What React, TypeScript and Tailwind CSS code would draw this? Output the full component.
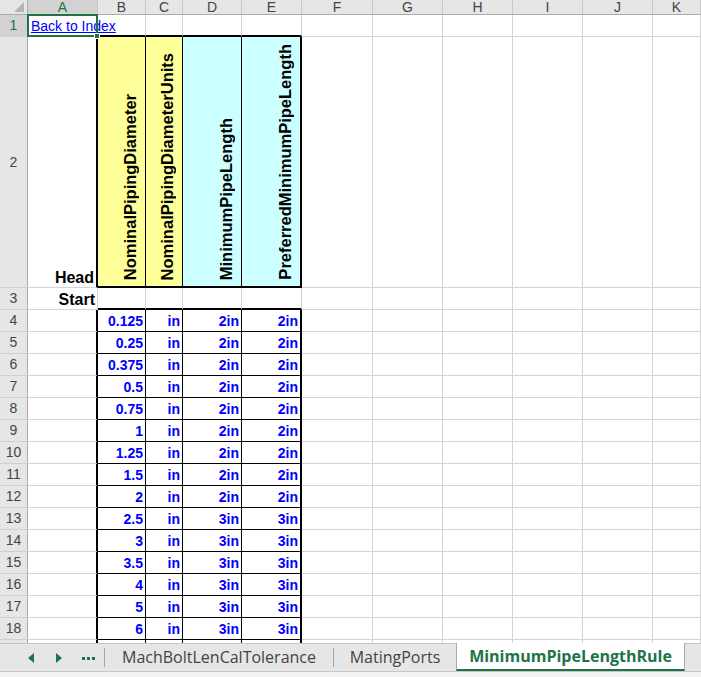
import React from 'react';

const COLS = ['A', 'B', 'C', 'D', 'E', 'F', 'G', 'H', 'I', 'J', 'K'];
const GRID = 'grid grid-cols-[28px_70px_48px_37px_59px_60px_71px_70px_70px_70px_70px_1fr]';

const HEADERS = [
  { label: 'NominalPipingDiameter', bg: 'bg-[#ffff99]' },
  { label: 'NominalPipingDiameterUnits', bg: 'bg-[#ffff99]' },
  { label: 'MinimumPipeLength', bg: 'bg-[#ccffff]' },
  { label: 'PreferredMinimumPipeLength', bg: 'bg-[#ccffff]' },
];

// row 19 is only a sliver above the sheet tabs, so it is left empty
const DATA: [string, string, string, string][] = [
  ['0.125', 'in', '2in', '2in'],
  ['0.25', 'in', '2in', '2in'],
  ['0.375', 'in', '2in', '2in'],
  ['0.5', 'in', '2in', '2in'],
  ['0.75', 'in', '2in', '2in'],
  ['1', 'in', '2in', '2in'],
  ['1.25', 'in', '2in', '2in'],
  ['1.5', 'in', '2in', '2in'],
  ['2', 'in', '2in', '2in'],
  ['2.5', 'in', '3in', '3in'],
  ['3', 'in', '3in', '3in'],
  ['3.5', 'in', '3in', '3in'],
  ['4', 'in', '3in', '3in'],
  ['5', 'in', '3in', '3in'],
  ['6', 'in', '3in', '3in'],
  ['', '', '', ''],
];

// borders for a worksheet cell; row = excel row number, col = 0 for A
function cellBorder(row: number, col: number) {
  const tableRow = row === 2 || row >= 4;
  const inTable = tableRow && col >= 1 && col <= 4;
  let right = 'border-r border-r-[#d4d4d4]';
  if (inTable && col === 4) right = 'border-r-2 border-r-black';
  else if (inTable) right = 'border-r border-r-black';
  else if (tableRow && col === 0) right = 'border-r-2 border-r-black';

  let bottom = 'border-b border-b-[#d4d4d4]';
  if (inTable && row === 2) bottom = 'border-b-2 border-b-black';
  else if (inTable) bottom = 'border-b border-b-black';
  else if ((row === 1 || row === 3) && col >= 1 && col <= 4) bottom = 'border-b-2 border-b-black';

  return `${right} ${bottom}`;
}

function RowHeader({ n, selected }: { n: number; selected?: boolean }) {
  return (
    <div
      className={`flex items-center justify-center border-r border-r-[#ababab] border-b border-b-[#d0d0d0] text-[14px] ${
        selected ? 'bg-[#d2d2d2] text-[#217346]' : 'bg-[#e6e6e6] text-[#444]'
      }`}
    >
      {n < 19 ? n : ''}
    </div>
  );
}

function ColumnHeaders() {
  return (
    <div className={`${GRID} h-[15px]`}>
      <div className="relative bg-[#e6e6e6] border-r border-r-[#ababab] border-b border-b-[#ababab]">
        <div className="absolute right-[3px] bottom-[2px] w-0 h-0 border-l-[10px] border-l-transparent border-b-[10px] border-b-[#b4b4b4]" />
      </div>
      {COLS.map((c, i) => (
        <div
          key={c}
          className={`flex items-center justify-center text-[14px] leading-none border-r border-r-[#c8c8c8] border-b border-b-[#ababab] ${
            i === 0 ? 'bg-[#d2d2d2] text-[#217346]' : 'bg-[#e6e6e6] text-[#444]'
          }`}
        >
          {c}
        </div>
      ))}
    </div>
  );
}

function Row1() {
  return (
    <div className={`${GRID} h-[22px]`}>
      <RowHeader n={1} selected />
      <div className={`relative flex items-end pl-[3px] pb-[2px] ${cellBorder(1, 0)}`}>
        <a href="#" className="whitespace-nowrap text-[14px] leading-[16px] text-[#0000ff] underline">
          Back to Index
        </a>
        <div className="absolute -left-px -top-px -right-px -bottom-px border-2 border-[#217346]" />
        <div className="absolute -right-[3px] -bottom-[3px] w-[6px] h-[6px] bg-[#217346] border border-white" />
      </div>
      {COLS.slice(1).map((c, i) => (
        <div key={c} className={cellBorder(1, i + 1)} />
      ))}
    </div>
  );
}

function Row2() {
  return (
    <div className={`${GRID} h-[251px]`}>
      <RowHeader n={2} />
      <div className={`flex items-end justify-end pr-[2px] text-[16px] leading-[18px] font-bold ${cellBorder(2, 0)}`}>
        Head
      </div>
      {HEADERS.map((h, i) => (
        <div key={h.label} className={`flex items-end justify-end pr-[6px] pb-[6px] ${h.bg} ${cellBorder(2, i + 1)}`}>
          <span className="[writing-mode:vertical-rl] rotate-180 whitespace-nowrap text-[16.5px] leading-[18px] font-bold">
            {h.label}
          </span>
        </div>
      ))}
      {COLS.slice(5).map((c, i) => (
        <div key={c} className={cellBorder(2, i + 5)} />
      ))}
    </div>
  );
}

function Row3() {
  return (
    <div className={`${GRID} h-[22px]`}>
      <RowHeader n={3} />
      <div className={`flex items-end justify-end pr-[2px] text-[16px] leading-[18px] font-bold ${cellBorder(3, 0)}`}>
        Start
      </div>
      {COLS.slice(1).map((c, i) => (
        <div key={c} className={cellBorder(3, i + 1)} />
      ))}
    </div>
  );
}

function DataRow({ n, values }: { n: number; values: string[] }) {
  return (
    <div className={`${GRID} h-[22px]`}>
      <RowHeader n={n} />
      <div className={cellBorder(n, 0)} />
      {values.map((v, i) => (
        <div
          key={i}
          className={`flex items-end justify-end pr-[2px] pb-[2px] text-[14px] leading-[16px] font-bold text-[#0000ff] ${cellBorder(n, i + 1)}`}
        >
          {v}
        </div>
      ))}
      {COLS.slice(5).map((c, i) => (
        <div key={c} className={cellBorder(n, i + 5)} />
      ))}
    </div>
  );
}

function TriangleLeft() {
  return (
    <svg width="6" height="10" viewBox="0 0 6 10">
      <path d="M6 0 L0 5 L6 10 Z" fill="#217346" />
    </svg>
  );
}

function TriangleRight() {
  return (
    <svg width="6" height="10" viewBox="0 0 6 10">
      <path d="M0 0 L6 5 L0 10 Z" fill="#217346" />
    </svg>
  );
}

function SheetTabs() {
  return (
    <div className="flex flex-col">
      <div className="flex h-[28px] bg-[#e6e6e6] border-t border-t-[#c6c6c6] font-['Open_Sans','Noto_Sans',sans-serif] text-[16px] text-[#444]">
        <div className="flex items-center w-[104px] pl-[28px]">
          <TriangleLeft />
          <span className="ml-[22px]">
            <TriangleRight />
          </span>
          <span className="ml-[20px] mt-[2px] flex gap-[2px]">
            <i className="block w-[3px] h-[3px] bg-[#217346]" />
            <i className="block w-[3px] h-[3px] bg-[#217346]" />
            <i className="block w-[3px] h-[3px] bg-[#217346]" />
          </span>
        </div>
        <div className="self-center w-px h-[19px] bg-[#a6a6a6]" />
        <div className="flex items-center justify-center w-[228px] pb-[2px]">MachBoltLenCalTolerance</div>
        <div className="self-center w-px h-[19px] bg-[#a6a6a6]" />
        <div className="flex items-center justify-center w-[122px] pb-[2px]">MatingPorts</div>
        <div className="flex items-center justify-center w-[229px] -mt-px pb-[1px] bg-white border-x border-x-[#ababab] border-b-2 border-b-[#217346] font-bold text-[#217346]">
          MinimumPipeLengthRule
        </div>
        <div className="flex-1" />
      </div>
      <div className="h-[6px] bg-[#f3f3f3] border-t border-t-[#c6c6c6]" />
    </div>
  );
}

export default function App() {
  return (
    <div className="w-[701px] h-[677px] overflow-hidden bg-white font-['Liberation_Sans',Arial,sans-serif] text-black">
      <div className="h-[643px] overflow-hidden">
        <ColumnHeaders />
        <Row1 />
        <Row2 />
        <Row3 />
        {DATA.map((d, i) => (
          <DataRow key={i} n={i + 4} values={d} />
        ))}
      </div>
      <SheetTabs />
    </div>
  );
}
